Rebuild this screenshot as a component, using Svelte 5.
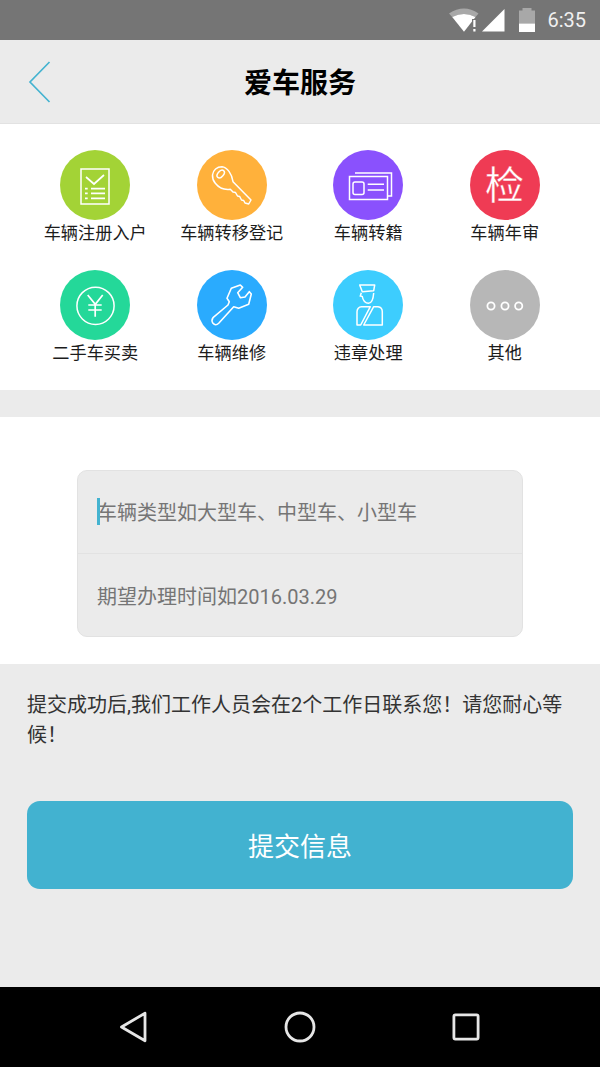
<script lang="ts">
  const services = [
    { label: '车辆注册入户', color: '#a3d336', icon: 'form' },
    { label: '车辆转移登记', color: '#ffb13b', icon: 'key' },
    { label: '车辆转籍', color: '#8a51fd', icon: 'card' },
    { label: '车辆年审', color: '#ef3b54', icon: 'check' },
    { label: '二手车买卖', color: '#24d899', icon: 'yen' },
    { label: '车辆维修', color: '#2aabfe', icon: 'wrench' },
    { label: '违章处理', color: '#3dcdfe', icon: 'police' },
    { label: '其他', color: '#b7b7b7', icon: 'more' }
  ];
</script>

<div class="page">
  <div class="status">
    <svg class="wifi" width="30" height="26" viewBox="0 0 30 26">
      <path d="M0 6.500Q15 -3.500 29.500 6.500L26.500 10Q15 3.800 3.200 10Z" fill="#a8a8a8" />
      <path d="M3.200 10Q15 3.800 26.500 10L15 24.700Z" fill="#fff" />
      <rect x="23" y="12" width="4" height="14" fill="#757575" />
      <path d="M24.300 13h2.200v7h-2.200zM24.300 22h2.200v2.500h-2.200z" fill="#fff" />
    </svg>
    <svg class="signal" width="23" height="24" viewBox="0 0 23 24"><path d="M0 23.500 22.500 1v22.500Z" fill="#fff" /></svg>
    <svg class="battery" width="16" height="24" viewBox="0 0 16 24">
      <path d="M3.500 0h9v2.500H16V15.500H0V2.500h3.500Z" fill="#a8a8a8" />
      <rect y="15.500" width="16" height="8.500" fill="#fff" />
    </svg>
    <span class="time">6:35</span>
  </div>

  <header>
    <svg class="back" width="24" height="42" viewBox="0 0 24 42">
      <path d="M21.500 1 2 21l19.500 20" fill="none" stroke="#44b3d0" stroke-width="1.700" />
    </svg>
    <h1>爱车服务</h1>
  </header>

  <section class="grid">
    {#each services as s}
      <div class="item">
        <div class="circle" style="background: {s.color}">
          <svg width="70" height="70" viewBox="0 0 70 70" fill="none" stroke="#fff" stroke-width="1.500">
            {#if s.icon === 'form'}
              <rect x="21" y="19" width="28" height="35" />
              <path d="M26 27l8 7 10-9" stroke-width="1.700" />
              <path d="M31 38.700h14M31 43.300h14M31 48.300h14" stroke-width="1.700" />
              <path d="M25 38.700h2.700M25 43.300h2.700M25 48.300h2.700" stroke-width="1.700" />
            {:else if s.icon === 'key'}
              <path d="M15.500 25C16 20 20 16.700 25 16.700 30 17 35 24 36 31.700L54 50 51.700 54 48 53 46.700 50.500 44.500 50 42.700 46.500 40.500 46 38.500 42.500 36 42 33.300 39.300C28 40 22 38 18.300 33.300 16 30.500 15.300 28 15.500 25Z" stroke-linejoin="round" />
              <ellipse cx="23.700" cy="24" rx="2.800" ry="4.500" transform="rotate(40 23.700 24)" />
            {:else if s.icon === 'card'}
              <rect x="16.500" y="26.500" width="38" height="23" />
              <path d="M22 23h36.500v23H55" />
              <rect x="20" y="32" width="11" height="12.500" rx="2" />
              <path d="M34.700 34.300h16.300M34.700 40h16.300" />
            {:else if s.icon === 'check'}
              <text class="glyph" x="34.500" y="48.500">检</text>
            {:else if s.icon === 'yen'}
              <circle cx="35.500" cy="35.800" r="18.600" />
              <path d="M27.700 25l7.600 9.300 7.400-9.300M28.300 35h13.400M28.300 40h13.400M35.200 34v12.700" stroke-width="1.700" />
            {:else if s.icon === 'wrench'}
              <path d="M16 47.700 31 35 32.300 31.700 30 28.300 34.300 18.300 43.300 15 45.700 17.300 40.700 22.700 43.300 27.700 48 27 52.300 21.700 54.300 24 51.700 34.300 41.700 38.300 36.700 36.700 21.700 53.300C19.500 55.500 17.500 55 16 53.300 14.800 51.500 14.800 49.300 16 47.700Z" stroke-width="1.600" stroke-linejoin="round" />
            {:else if s.icon === 'police'}
              <path d="M26.700 15H41.700L40.700 20.700 29.300 21.700Z" stroke-linejoin="round" />
              <path d="M28.300 22.700 27.300 26 29.300 26.500C29.800 30.500 32.500 33.300 35.500 33.300 38.500 33.300 40.300 28.300 40.700 23" />
              <path d="M24 41.700C24 39 26 36.700 28.300 36.700H37.300L27.700 55H24Z" stroke-linejoin="round" />
              <path d="M40.700 36.700H45C47.500 37 49.300 39 49.300 41.700V55H30.700Z" stroke-linejoin="round" />
            {:else}
              <circle cx="21" cy="36" r="3.600" stroke-width="1.800" />
              <circle cx="35" cy="36" r="3.600" stroke-width="1.800" />
              <circle cx="48.700" cy="36" r="3.600" stroke-width="1.800" />
            {/if}
          </svg>
        </div>
        <div class="label">{s.label}</div>
      </div>
    {/each}
  </section>

  <section class="form">
    <div class="fields">
      <div class="field first"><span class="caret"></span>车辆类型如大型车、中型车、小型车</div>
      <div class="field second">期望办理时间如2016.03.29</div>
    </div>
  </section>

  <main>
    <p>提交成功后,我们工作人员会在2个工作日联系您！请您耐心等候！</p>
    <button>提交信息</button>
  </main>

  <nav>
    <svg width="28" height="34" viewBox="0 0 28 34"><path d="M26 3.200 2.500 17 26 30.800Z" fill="none" stroke="#e6e6e6" stroke-width="2.800" stroke-linejoin="round" /></svg>
    <svg width="32" height="32" viewBox="0 0 32 32"><circle cx="16" cy="16" r="14" fill="none" stroke="#e6e6e6" stroke-width="2.800" /></svg>
    <svg width="28" height="28" viewBox="0 0 28 28"><rect x="1.900" y="1.900" width="24.200" height="24.200" rx="1.500" fill="none" stroke="#e6e6e6" stroke-width="2.800" /></svg>
  </nav>
</div>

<style>
  :global(body) {
    margin: 0;
  }

  .page {
    width: 600px;
    height: 1067px;
    display: flex;
    flex-direction: column;
    background: #ebebeb;
    overflow: hidden;
    font-family: Roboto, "Noto Sans CJK SC", sans-serif;
  }

  .status {
    height: 40px;
    flex: none;
    background: #757575;
    display: flex;
    align-items: center;
    justify-content: flex-end;
    padding-right: 14px;
    box-sizing: border-box;
  }

  .signal {
    margin-left: 3px;
  }

  .battery {
    margin-left: 14px;
  }

  .time {
    margin-left: 12px;
    color: #f0f0f0;
    font-size: 20px;
  }

  header {
    height: 84px;
    flex: none;
    box-sizing: border-box;
    padding-bottom: 2px;
    display: flex;
    align-items: center;
    justify-content: center;
    position: relative;
    border-bottom: 1px solid #e2e2e2;
  }

  .back {
    position: absolute;
    left: 28px;
    top: 21px;
  }

  h1 {
    margin: 0;
    font-size: 28px;
    font-weight: 700;
    color: #000;
  }

  .grid {
    height: 266px;
    flex: none;
    box-sizing: border-box;
    background: #fff;
    display: grid;
    grid-template-columns: repeat(4, 136.500px);
    grid-auto-rows: 120px;
    padding: 26px 0 0 27px;
  }

  .item {
    display: flex;
    flex-direction: column;
    align-items: center;
  }

  .circle {
    width: 70px;
    height: 70px;
    border-radius: 50%;
  }

  .circle svg {
    display: block;
  }

  .glyph {
    font-family: "Noto Sans CJK SC", sans-serif;
    font-size: 39px;
    font-weight: 400;
    text-anchor: middle;
    fill: #fff;
    stroke: #ef3b54;
    stroke-width: 0.3;
  }

  .label {
    margin-top: 1px;
    font-size: 17.200px;
    line-height: 24px;
    color: #1c1c1c;
    white-space: nowrap;
  }

  .form {
    margin-top: 27px;
    height: 247px;
    flex: none;
    box-sizing: border-box;
    background: #fff;
    padding: 53px 77px 0;
  }

  .fields {
    height: 167px;
    box-sizing: border-box;
    background: #ebebeb;
    border: 1px solid #e2e2e2;
    border-radius: 10px;
  }

  .field {
    box-sizing: border-box;
    padding-left: 19px;
    display: flex;
    align-items: center;
    font-size: 20px;
    color: #757575;
    position: relative;
  }

  .first {
    height: 82px;
    padding-bottom: 2px;
  }

  .second {
    height: 83px;
    border-top: 1px solid #e2e2e2;
    padding-top: 1px;
  }

  .caret {
    position: absolute;
    left: 19px;
    top: 27px;
    width: 3px;
    height: 27px;
    background: #44b3d0;
  }

  main {
    flex: 1;
    padding: 26px 27px 0;
  }

  p {
    margin: 0;
    font-size: 20px;
    line-height: 30px;
    color: #333;
  }

  button {
    display: block;
    width: 100%;
    height: 88px;
    margin-top: 51px;
    padding: 0 0 2px;
    border: none;
    border-radius: 13px;
    background: #42b2d0;
    color: #fff;
    font-family: inherit;
    font-size: 26px;
  }

  nav {
    height: 80px;
    flex: none;
    background: #000;
    display: flex;
    align-items: center;
    justify-content: space-between;
    padding: 0 120px 0 119px;
  }
</style>
